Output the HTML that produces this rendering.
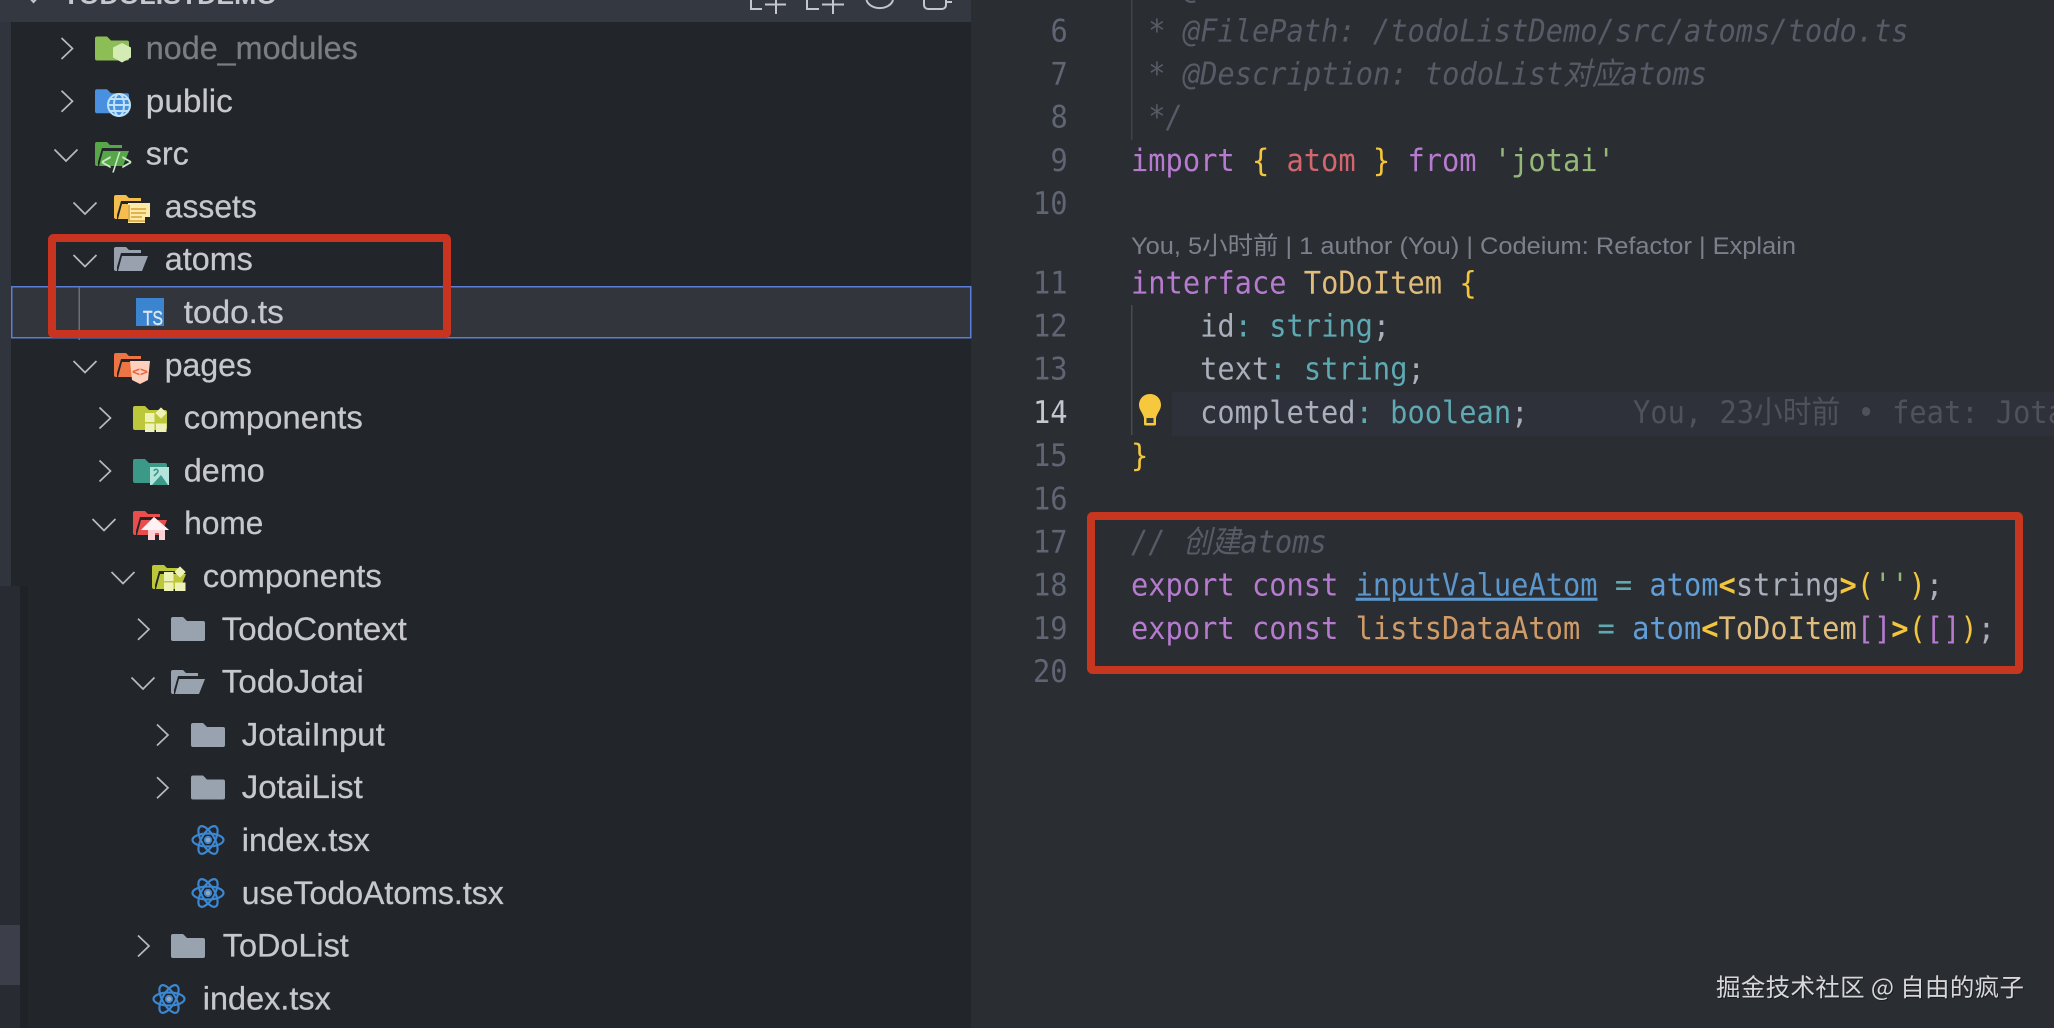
<!DOCTYPE html>
<html lang="zh">
<head>
<meta charset="utf-8">
<title>todo.ts</title>
<style>
html,body{margin:0;padding:0;background:#2a2d32;width:2054px;height:1028px;overflow:hidden}
svg{display:block;position:absolute;left:0;top:0;filter:blur(.35px)}
.t{font-family:"Liberation Sans",sans-serif;font-size:32px;fill:#c6c8cd;stroke:#c6c8cd;stroke-width:.25px}
.c{font-family:"DejaVu Sans Mono","Noto Sans CJK SC",monospace;font-size:31px;fill:#abb2bf;white-space:pre}
.n{font-family:"DejaVu Sans Mono",monospace;font-size:31px;fill:#5f6573}
.cm{font-style:italic;fill:#565b66}
.k{fill:#b67bcf}.y{fill:#f2c53d}.r{fill:#d2666e}.g{fill:#95b878}.o{fill:#e0bd7c}.q{fill:#5fa9b2}.b{fill:#629fd8}.u{fill:#5b96cc;text-decoration:underline}.a{fill:#cf9b68}.p{fill:#b67bcf}.w{fill:#a9afbb}
</style>
</head>
<body>
<svg width="2054" height="1028" viewBox="0 0 2054 1028" xmlns="http://www.w3.org/2000/svg">
<defs>
<path id="fc" d="M2,-12H12l4,4H32a2,2 0 0 1 2,2V10a2,2 0 0 1-2,2H2a2,2 0 0 1-2-2V-10a2,2 0 0 1 2-2z"/>
<g id="fo"><path d="M2,-12H12l3,3H27v3H7L3,8v4H2a2,2 0 0 1-2-2V-10a2,2 0 0 1 2-2z"/><path d="M8,-3H34L28,12H4z"/></g>
<g id="re" fill="none" stroke="#3c87d2" stroke-width="2.2">
<ellipse cx="16" cy="0" rx="15.5" ry="6.5"/>
<ellipse cx="16" cy="0" rx="15.5" ry="6.5" transform="rotate(60 16 0)"/>
<ellipse cx="16" cy="0" rx="15.5" ry="6.5" transform="rotate(120 16 0)"/>
<circle cx="16" cy="0" r="3.2" fill="#8fa6bd" stroke="#3c87d2" stroke-width="1.8"/>
</g>
<g id="sq" fill="#eef2b8">
<rect x="12" y="-5" width="9.5" height="9"/><rect x="12" y="5.5" width="9.5" height="8.5"/><rect x="23" y="5.5" width="10.5" height="8.5"/><rect x="24" y="-9" width="8" height="8" transform="rotate(45 28 -5)"/>
</g>
<path id="cr" d="M0,-10.5L11,0L0,10.5" fill="none" stroke="#b7babf" stroke-width="1.7"/>
<path id="cd" d="M-11.5,-6L0,5.5L11.5,-6" fill="none" stroke="#b7babf" stroke-width="1.7"/>
</defs>

<!-- backgrounds -->
<rect width="2054" height="1028" fill="#2a2d32"/>
<rect x="0" y="0" width="971" height="1028" fill="#22252a"/>
<rect x="0" y="0" width="11" height="1028" fill="#2f343d"/>
<rect x="0" y="0" width="971" height="22" fill="#343841"/>
<rect x="0" y="586" width="20" height="442" fill="#282b32"/>
<rect x="20" y="586" width="8" height="442" fill="#1f2226"/>
<rect x="0" y="925" width="20" height="60" fill="#3c3f49"/>

<!-- header -->
<path d="M28,-4L33.5,2L39,-4" fill="none" stroke="#c6c8cd" stroke-width="2"/>
<text x="63" y="4" textLength="214" lengthAdjust="spacingAndGlyphs" font-family="Liberation Sans" font-size="25" font-weight="700" fill="#c6c8cd">TODOLISTDEMO</text>
<g fill="none" stroke="#c3c6cc" stroke-width="2">
<path d="M751,0V9H762"/><path d="M776,0V14M765,4.5H786"/>
<path d="M807,0V9H819"/><path d="M833,0V14M822,4.5H844"/>
<path d="M866.5,0a13.5,10 0 0 0 26.5,0"/>
<path d="M924,0V5a4,4 0 0 0 4,4H942a4,4 0 0 0 4-4V0M946,2H952"/>
</g>

<!-- selected row -->
<rect x="11.75" y="286.75" width="959" height="51" fill="#32353c" stroke="#5b7fd6" stroke-width="1.5"/>
<rect x="78.5" y="287" width="1.5" height="53" fill="#6c6f75"/>

<!-- chevrons -->
<use href="#cr" x="61.5" y="48.5"/>
<use href="#cr" x="61.5" y="101.3"/>
<use href="#cd" x="66" y="155.5"/>
<use href="#cd" x="85" y="208.5"/>
<use href="#cd" x="85" y="261"/>
<use href="#cd" x="85" y="367"/>
<use href="#cr" x="99.5" y="418"/>
<use href="#cr" x="99.5" y="471"/>
<use href="#cd" x="104" y="525"/>
<use href="#cd" x="123" y="578"/>
<use href="#cr" x="138" y="629.3"/>
<use href="#cd" x="143" y="683.5"/>
<use href="#cr" x="157" y="735"/>
<use href="#cr" x="157" y="787.7"/>
<use href="#cr" x="138" y="946"/>

<!-- folder icons -->
<g fill="#8dbd55"><use href="#fc" x="95" y="48.5"/></g>
<path d="M122,43l9,4.5v10l-9,5l-9-5v-10z" fill="#d5ebb6"/>
<g fill="#4a90e0"><use href="#fc" x="95" y="101.3"/></g>
<g fill="none" stroke="#bfe3f6" stroke-width="2"><circle cx="119" cy="105" r="11" fill="#4a90e0"/><ellipse cx="119" cy="105" rx="5" ry="11"/><path d="M108,105H130M110,99H128M110,111H128"/></g>
<g fill="#57a648"><use href="#fo" x="95" y="154"/></g>
<text x="101" y="170" font-family="DejaVu Sans Mono" font-size="25" fill="#c9e8c4" textLength="31" lengthAdjust="spacingAndGlyphs">&lt;/&gt;</text>
<g fill="#f5bd4c"><use href="#fo" x="114" y="207"/></g>
<path d="M128,203H150V217H145V223H128z" fill="#ffe9a6"/>
<path d="M131,209H146M131,213H146M131,217H142M129,205V221H145" stroke="#d69f35" stroke-width="1.6" fill="none"/>
<g fill="#98a1ad"><use href="#fo" x="114" y="259"/></g>
<rect x="136" y="298" width="28" height="28" fill="#3b85d0"/>
<text x="143" y="325" font-family="Liberation Sans" font-size="20" font-weight="400" fill="#d8e8f7" stroke="#d8e8f7" stroke-width=".4" textLength="20" lengthAdjust="spacingAndGlyphs">TS</text>
<g fill="#ed7443"><use href="#fo" x="114" y="365"/></g>
<path d="M130,361H150L148,380L140,384L132,380z" fill="#ffd0bd"/>
<text x="132" y="376" font-family="DejaVu Sans Mono" font-size="13" font-weight="700" fill="#e8623a" textLength="16" lengthAdjust="spacingAndGlyphs">&lt;&gt;</text>
<g fill="#bdc73a"><use href="#fc" x="133" y="418"/></g>
<g transform="translate(133,418)"><use href="#sq"/></g>
<g fill="#3a9a87"><use href="#fc" x="133" y="471"/></g>
<rect x="150" y="467" width="19" height="18" fill="#b4e3db"/>
<path d="M152,485L161,475L168,485z" fill="#3a9a87"/>
<path d="M154,471a2,2 0 1 1 3,2l-3,3" fill="none" stroke="#3a9a87" stroke-width="1.6"/>
<g fill="#e94e4c"><use href="#fo" x="133" y="523"/></g>
<path d="M154,517L169,530H165V540H159V533H155V540H148V530H141z" fill="#fcd2d7"/>
<path d="M154,517L169,530H141z" fill="#fff2f3"/>
<g fill="#bdc73a"><use href="#fo" x="152" y="577"/></g>
<g transform="translate(152,577)"><use href="#sq"/></g>
<g fill="#99a3af"><use href="#fc" x="171" y="629"/></g>
<g fill="#99a3af"><use href="#fo" x="171" y="682"/></g>
<g fill="#99a3af"><use href="#fc" x="191" y="735"/></g>
<g fill="#99a3af"><use href="#fc" x="191" y="787.5"/></g>
<use href="#re" x="192" y="840"/>
<use href="#re" x="192" y="893"/>
<g fill="#99a3af"><use href="#fc" x="171" y="946"/></g>
<use href="#re" x="153" y="999"/>

<!-- tree labels -->
<g transform="translate(0.3,0.5)">
<text class="t" x="145.5" y="58.5" textLength="212" lengthAdjust="spacingAndGlyphs" style="fill:#7b7d82;stroke:#7b7d82">node_modules</text>
<text class="t" x="145.5" y="111.3" textLength="87" lengthAdjust="spacingAndGlyphs">public</text>
<text class="t" x="145.5" y="164.1" textLength="43" lengthAdjust="spacingAndGlyphs">src</text>
<text class="t" x="164.5" y="216.9" textLength="92" lengthAdjust="spacingAndGlyphs">assets</text>
<text class="t" x="164.5" y="269.7" textLength="88" lengthAdjust="spacingAndGlyphs">atoms</text>
<text class="t" x="183.5" y="322.5" textLength="100" lengthAdjust="spacingAndGlyphs">todo.ts</text>
<text class="t" x="164.5" y="375.3" textLength="87" lengthAdjust="spacingAndGlyphs">pages</text>
<text class="t" x="183.5" y="428.1" textLength="179" lengthAdjust="spacingAndGlyphs">components</text>
<text class="t" x="183.5" y="480.9" textLength="81" lengthAdjust="spacingAndGlyphs">demo</text>
<text class="t" x="184" y="533.7" textLength="79" lengthAdjust="spacingAndGlyphs">home</text>
<text class="t" x="202.5" y="586.5" textLength="179" lengthAdjust="spacingAndGlyphs">components</text>
<text class="t" x="221.5" y="639.3" textLength="185" lengthAdjust="spacingAndGlyphs">TodoContext</text>
<text class="t" x="221.5" y="692.1" textLength="142" lengthAdjust="spacingAndGlyphs">TodoJotai</text>
<text class="t" x="241.5" y="744.9" textLength="143" lengthAdjust="spacingAndGlyphs">JotaiInput</text>
<text class="t" x="241.5" y="797.7" textLength="121" lengthAdjust="spacingAndGlyphs">JotaiList</text>
<text class="t" x="241.5" y="850.5" textLength="128" lengthAdjust="spacingAndGlyphs">index.tsx</text>
<text class="t" x="241.5" y="903.3" textLength="262" lengthAdjust="spacingAndGlyphs">useTodoAtoms.tsx</text>
<text class="t" x="222.5" y="956.1" textLength="126" lengthAdjust="spacingAndGlyphs">ToDoList</text>
<text class="t" x="202.5" y="1008.9" textLength="128" lengthAdjust="spacingAndGlyphs">index.tsx</text>
</g>

<!-- red box left -->
<rect x="52" y="238" width="395" height="96" fill="none" stroke="#c8341f" stroke-width="8" rx="1.5"/>

<!-- editor -->
<rect x="1172" y="392" width="882" height="44" fill="#2e3139"/>
<rect x="1131" y="0" width="1.5" height="140" fill="#3f434a"/>
<rect x="1131" y="305" width="1.5" height="130" fill="#474b52"/>

<g transform="translate(0,0.6)">
<!-- line numbers -->
<text class="n" x="1050.5" y="40.7" textLength="17.3" lengthAdjust="spacingAndGlyphs">6</text>
<text class="n" x="1050.5" y="83.9" textLength="17.3" lengthAdjust="spacingAndGlyphs">7</text>
<text class="n" x="1050.5" y="127" textLength="17.3" lengthAdjust="spacingAndGlyphs">8</text>
<text class="n" x="1050.5" y="170.3" textLength="17.3" lengthAdjust="spacingAndGlyphs">9</text>
<text class="n" x="1033" y="213.5" textLength="34.6" lengthAdjust="spacingAndGlyphs">10</text>
<text class="n" x="1033" y="292.7" textLength="34.6" lengthAdjust="spacingAndGlyphs">11</text>
<text class="n" x="1033" y="335.9" textLength="34.6" lengthAdjust="spacingAndGlyphs">12</text>
<text class="n" x="1033" y="379.1" textLength="34.6" lengthAdjust="spacingAndGlyphs">13</text>
<text class="n" x="1033" y="422.3" textLength="34.6" lengthAdjust="spacingAndGlyphs" style="fill:#c3c7d0">14</text>
<text class="n" x="1033" y="465.5" textLength="34.6" lengthAdjust="spacingAndGlyphs">15</text>
<text class="n" x="1033" y="508.7" textLength="34.6" lengthAdjust="spacingAndGlyphs">16</text>
<text class="n" x="1033" y="551.9" textLength="34.6" lengthAdjust="spacingAndGlyphs">17</text>
<text class="n" x="1033" y="595.1" textLength="34.6" lengthAdjust="spacingAndGlyphs">18</text>
<text class="n" x="1033" y="638.3" textLength="34.6" lengthAdjust="spacingAndGlyphs">19</text>
<text class="n" x="1033" y="681.5" textLength="34.6" lengthAdjust="spacingAndGlyphs">20</text>

<!-- code -->
<text class="c cm" x="1183" y="-2.5" textLength="17.3" lengthAdjust="spacingAndGlyphs">@</text>
<text class="c cm" x="1131" y="40.7" xml:space="preserve" textLength="777.6" lengthAdjust="spacingAndGlyphs"> * @FilePath: /todoListDemo/src/atoms/todo.ts</text>
<text class="c cm" x="1131" y="83.9" xml:space="preserve" textLength="576" lengthAdjust="spacingAndGlyphs"> * @Description: todoList对应atoms</text>
<text class="c cm" x="1131" y="127" xml:space="preserve" textLength="51.8" lengthAdjust="spacingAndGlyphs"> */</text>
<text class="c" x="1131" y="170.3" xml:space="preserve" textLength="483.8" lengthAdjust="spacingAndGlyphs"><tspan class="k">import</tspan> <tspan class="y">{</tspan> <tspan class="r">atom</tspan> <tspan class="y">}</tspan> <tspan class="k">from</tspan> <tspan class="g">'jotai'</tspan></text>
<text class="c" x="1131" y="292.7" xml:space="preserve" textLength="345.6" lengthAdjust="spacingAndGlyphs"><tspan class="k">interface</tspan> <tspan class="o">ToDoItem</tspan> <tspan class="y">{</tspan></text>
<text class="c" x="1131" y="335.9" xml:space="preserve" textLength="259.2" lengthAdjust="spacingAndGlyphs">    <tspan class="w">id</tspan><tspan class="q">:</tspan> <tspan class="q">string</tspan><tspan class="w">;</tspan></text>
<text class="c" x="1131" y="379.1" xml:space="preserve" textLength="293.8" lengthAdjust="spacingAndGlyphs">    <tspan class="w">text</tspan><tspan class="q">:</tspan> <tspan class="q">string</tspan><tspan class="w">;</tspan></text>
<text class="c" x="1131" y="422.3" xml:space="preserve" textLength="397.4" lengthAdjust="spacingAndGlyphs">    <tspan class="w">completed</tspan><tspan class="q">:</tspan> <tspan class="q">boolean</tspan><tspan class="w">;</tspan></text>
<text class="c" x="1633" y="422.3" xml:space="preserve" style="fill:#4e525b" textLength="432" lengthAdjust="spacingAndGlyphs">You, 23小时前 • feat: Jota</text>
<text class="c" x="1131" y="465.5" textLength="17.3" lengthAdjust="spacingAndGlyphs"><tspan class="y">}</tspan></text>
<text class="c cm" x="1131" y="551.9" xml:space="preserve" textLength="195.8" lengthAdjust="spacingAndGlyphs">// 创建atoms</text>
<text class="c" x="1131" y="595.1" xml:space="preserve" textLength="812.2" lengthAdjust="spacingAndGlyphs"><tspan class="k">export</tspan> <tspan class="k">const</tspan> <tspan class="u">inputValueAtom</tspan> <tspan class="q">=</tspan> <tspan class="b">atom</tspan><tspan class="y" font-weight="700">&lt;</tspan><tspan class="w">string</tspan><tspan class="y" font-weight="700">&gt;</tspan><tspan class="y">(</tspan><tspan class="g">''</tspan><tspan class="y">)</tspan><tspan class="w">;</tspan></text>
<text class="c" x="1131" y="638.3" xml:space="preserve" textLength="864" lengthAdjust="spacingAndGlyphs"><tspan class="k">export</tspan> <tspan class="k">const</tspan> <tspan class="a">listsDataAtom</tspan> <tspan class="q">=</tspan> <tspan class="b">atom</tspan><tspan class="y" font-weight="700">&lt;</tspan><tspan class="o">ToDoItem</tspan><tspan class="p">[]</tspan><tspan class="y" font-weight="700">&gt;</tspan><tspan class="y">(</tspan><tspan class="p">[]</tspan><tspan class="y">)</tspan><tspan class="w">;</tspan></text>
</g>
<text x="1131" y="254" font-family="Liberation Sans,Noto Sans CJK SC,sans-serif" font-size="24.5" fill="#7c808b" textLength="665" lengthAdjust="spacingAndGlyphs">You, 5小时前 | 1 author (You) | Codeium: Refactor | Explain</text>

<!-- bulb -->
<path d="M1150,394c6.5,0 11,5 11,11c0,5-4,8-5,13v6a1.5,1.5 0 0 1-1.5,1.5h-9a1.5,1.5 0 0 1-1.5-1.5v-6c-1-5-5-8-5-13c0-6 4.5-11 11-11z" fill="#f6c83e"/>
<rect x="1146.5" y="418" width="7" height="5" fill="#3a3a34"/>

<!-- red box right -->
<rect x="1091" y="516" width="928" height="154" fill="none" stroke="#c7361f" stroke-width="8" rx="1.5"/>

<!-- watermark -->
<text x="1716" y="996" font-family="Noto Sans CJK SC,Liberation Sans,sans-serif" font-size="24.5" fill="#1b1c20" textLength="308" lengthAdjust="spacing" transform="translate(1,1)">掘金技术社区 @ 自由的疯子</text>
<text x="1716" y="996" font-family="Noto Sans CJK SC,Liberation Sans,sans-serif" font-size="24.5" fill="#d6d7d9" textLength="308" lengthAdjust="spacing">掘金技术社区 @ 自由的疯子</text>
</svg>
</body>
</html>
